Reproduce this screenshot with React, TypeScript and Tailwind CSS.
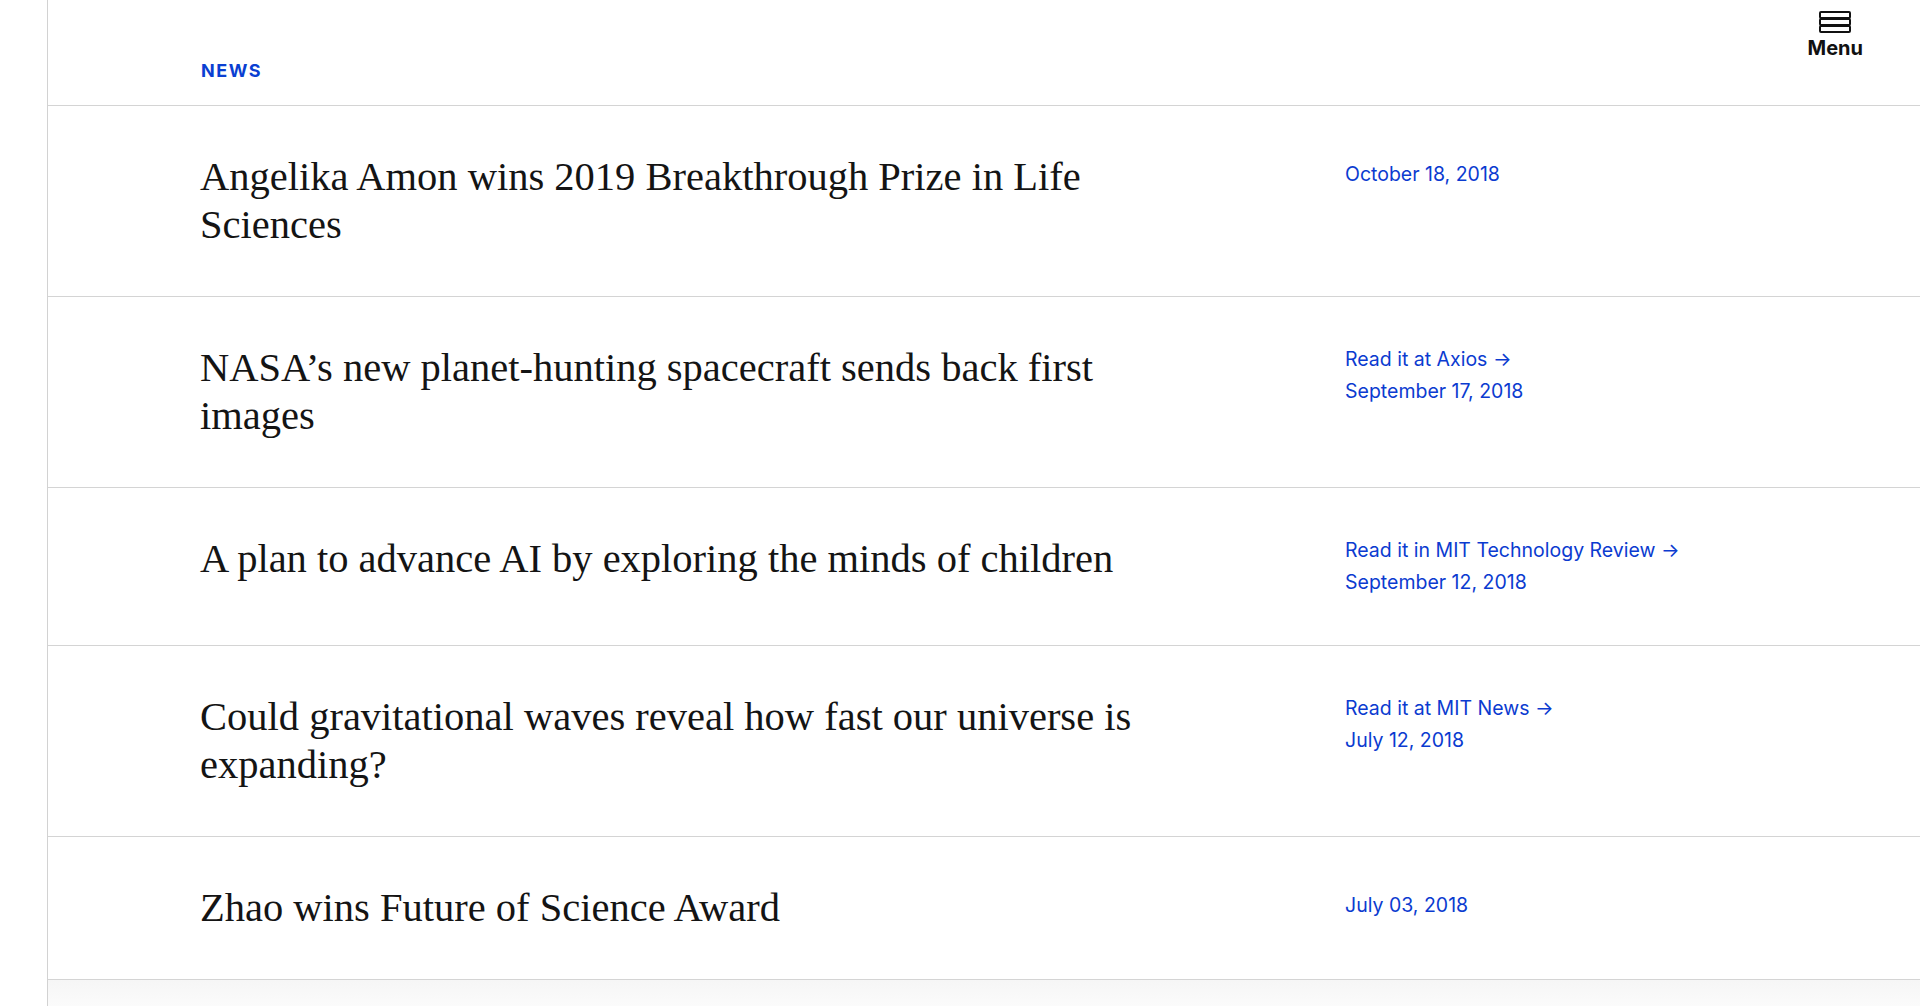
import React from "react";

type Item = { title: string; link?: string; date: string };

const items: Item[] = [
  { title: "Angelika Amon wins 2019 Breakthrough Prize in Life Sciences", date: "October 18, 2018" },
  { title: "NASA’s new planet-hunting spacecraft sends back first images", link: "Read it at Axios", date: "September 17, 2018" },
  { title: "A plan to advance AI by exploring the minds of children", link: "Read it in MIT Technology Review", date: "September 12, 2018" },
  { title: "Could gravitational waves reveal how fast our universe is expanding?", link: "Read it at MIT News", date: "July 12, 2018" },
  { title: "Zhao wins Future of Science Award", date: "July 03, 2018" },
];

export default function App() {
  return (
    <div className="min-h-[1006px] w-full bg-white flex">
      <div className="w-[47px] shrink-0" />
      <div className="flex-1 border-l border-[#d2d2d2] flex flex-col">
        <header className="h-[106px] border-b border-[#d4d4d4] flex justify-between">
          <div className="pl-[153px] pt-[57px]">
            <span className="text-[18px] font-bold tracking-[1.5px] text-[#0a3fd2]" style={{ fontFamily: "Inter, 'Liberation Sans', sans-serif" }}>
              NEWS
            </span>
          </div>
          <div className="pr-[57px] pt-[11px] flex flex-col items-center" style={{ fontFamily: "Inter, 'Liberation Sans', sans-serif" }}>
            <div className="w-[32px] flex flex-col">
              <div className="h-[8px] border-2 border-[#111] rounded-[2px]" />
              <div className="h-[8px] border-2 border-[#111] rounded-[2px] -mt-[1px]" />
              <div className="h-[8px] border-2 border-[#111] rounded-[2px] -mt-[1px]" />
            </div>
            <span className="text-[20px] font-bold text-[#111] leading-[24px] mt-[3px]">Menu</span>
          </div>
        </header>
        {items.map((it) => (
          <div key={it.title} className="border-b border-[#d4d4d4] flex py-[47px]">
            <div
              className="pl-[152px] w-[1297px] shrink-0 text-[40.5px] leading-[48px] text-[#141414]"
              style={{ fontFamily: "'Liberation Serif', serif" }}
            >
              <div className="w-[965px]">{it.title}</div>
            </div>
            <div
              className={`text-[19.5px] leading-[31.5px] text-[#0b3bd0] ${it.link ? "" : "pt-[6px]"}`}
              style={{ fontFamily: "Inter, 'Liberation Sans', sans-serif" }}
            >
              {it.link && <div>{it.link} →</div>}
              <div>{it.date}</div>
            </div>
          </div>
        ))}
        <div className="flex-1 bg-gradient-to-b from-[#f6f6f6] to-[#fbfbfb]" />
      </div>
    </div>
  );
}
